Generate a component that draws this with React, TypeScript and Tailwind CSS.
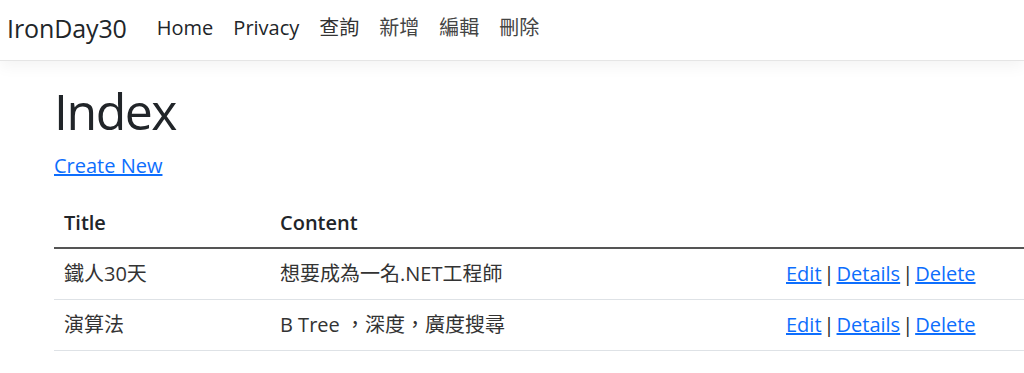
import React from "react";

const font = { fontFamily: '"Open Sans", "Noto Sans CJK TC", sans-serif' };

function Sep() {
  return <span className="mx-[2px] text-[#212529]">|</span>;
}

function Actions() {
  return (
    <span>
      <a href="#" className="text-[#0d6efd] underline">Edit</a>
      <Sep />
      <a href="#" className="text-[#0d6efd] underline">Details</a>
      <Sep />
      <a href="#" className="text-[#0d6efd] underline">Delete</a>
    </span>
  );
}

export default function App() {
  const rows = [
    { title: "鐵人30天", content: "想要成為一名.NET工程師" },
    { title: "演算法", content: "B Tree ，深度，廣度搜尋" },
  ];
  return (
    <div className="w-[1024px] h-[373px] overflow-hidden bg-white text-[#212529]" style={font}>
      <nav className="h-[61px] flex items-center border-b border-[#e5e5e5] shadow-[0_5px_15px_rgba(0,0,0,0.05)] bg-white pl-[7px] pb-[5px]">
        <a href="#" className="text-[25px] leading-[30px] text-[#212529] mr-[20px] tracking-[-0.1px]">IronDay30</a>
        <ul className="flex items-center text-[20px] leading-[30px]">
          <li><a href="#" className="px-[10px] text-[#212529]">Home</a></li>
          <li><a href="#" className="px-[10px] text-[#212529]">Privacy</a></li>
          <li><a href="#" className="px-[10px] text-[#333]">查詢</a></li>
          <li><a href="#" className="px-[10px] text-[#444]">新增</a></li>
          <li><a href="#" className="px-[10px] text-[#444]">編輯</a></li>
          <li><a href="#" className="px-[10px] text-[#444]">刪除</a></li>
        </ul>
      </nav>
      <main className="mt-[20px] pl-[54px]">
        <h1 className="text-[50px] leading-[60px] font-normal mb-[10px] tracking-[-1.5px]">Index</h1>
        <p className="text-[20px] leading-[30px] mb-[18px]">
          <a href="#" className="text-[#0d6efd] underline">Create New</a>
        </p>
        <table className="w-[970px] text-[20px] leading-[30px] border-collapse">
          <thead>
            <tr className="border-b-2 border-[#555]">
              <th className="w-[216px] text-left font-semibold px-[10px] py-[9px]">Title</th>
              <th className="w-[506px] text-left font-semibold px-[10px] py-[9px]">Content</th>
              <th className="px-[10px] py-[9px]"></th>
            </tr>
          </thead>
          <tbody>
            {rows.map((r) => (
              <tr key={r.title} className="border-b border-[#dee2e6]">
                <td className="px-[10px] py-[10px] text-[#333]">{r.title}</td>
                <td className="px-[10px] py-[10px] text-[#333]">{r.content}</td>
                <td className="px-[10px] py-[10px]"><Actions /></td>
              </tr>
            ))}
          </tbody>
        </table>
      </main>
    </div>
  );
}
